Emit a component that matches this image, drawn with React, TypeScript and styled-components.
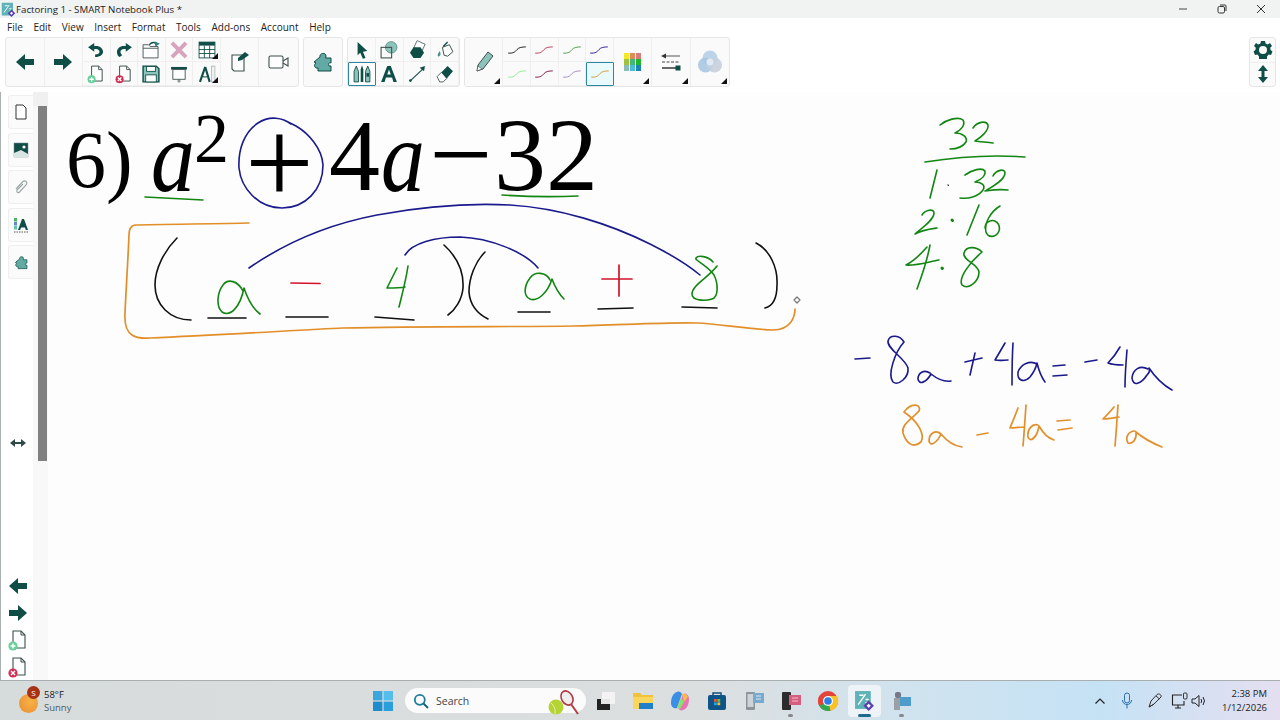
import { ReactNode } from "react";
import styled, { createGlobalStyle } from "styled-components";

const DARK = "#0f4d47";
const TEAL = "#8cc4bc";
const LINE = "#3d4f4d";

const GlobalStyle = createGlobalStyle`
  html, body { margin: 0; padding: 0; background: #fff; }
  body { font-family: "Open Sans", "Noto Sans", sans-serif; color: #222; }
`;

const Ico = ({ w = 24, h = 24, children }: { w?: number; h?: number; children: ReactNode }) => (
  <svg width={w} height={h} viewBox={`0 0 ${w} ${h}`} fill="none">{children}</svg>
);

const ArrowLeft = () => (
  <Ico w={20} h={18}><path d="M1 9 L10 1 V6 H19 V12 H10 V17 Z" fill={DARK} /></Ico>
);
const ArrowRight = () => (
  <Ico w={20} h={18}><path d="M19 9 L10 1 V6 H1 V12 H10 V17 Z" fill={DARK} /></Ico>
);
const Undo = () => (
  <Ico w={20} h={18}><path d="M8 1 L1 6 L8 11 V8 C12 7 14 9 14 11 C14 13 12 14 9 14 V17 C15 17 18 14 18 11 C18 7 14 3.5 8 4.5 Z" fill={DARK} /></Ico>
);
const Redo = () => (
  <Ico w={20} h={18}><path d="M12 1 L19 6 L12 11 V8 C8 7 6 9 6 11 C6 13 7 14 8 15 L5 17 C3 16 2 14 2 11 C2 7 6 3.5 12 4.5 Z" fill={DARK} /></Ico>
);
const DocPlain = ({ badge }: { badge?: "add" | "del" }) => (
  <Ico w={22} h={22}>
    <path d="M6 2 H14 L18 6 V19 H6 Z" fill="#fff" stroke={LINE} strokeWidth="1.1" />
    <path d="M14 2 V6 H18" stroke={LINE} strokeWidth="1" />
    {badge === "add" && <>
      <circle cx="6" cy="17" r="4.6" fill="#67cf9a" />
      <path d="M3.5 17 H8.5 M6 14.5 V19.5" stroke="#fff" strokeWidth="1.5" />
    </>}
    {badge === "del" && <>
      <circle cx="6" cy="17" r="4.6" fill="#d42f55" />
      <path d="M4 15 L8 19 M8 15 L4 19" stroke="#fff" strokeWidth="1.4" />
    </>}
  </Ico>
);
const OpenFolder = () => (
  <Ico w={24} h={22}>
    <path d="M3 5 H9 L11 7 H20 V20 H3 Z" fill="#fff" stroke={LINE} strokeWidth="1" />
    <path d="M3 9 H20" stroke={LINE} strokeWidth="1" />
    <path d="M10 5 C13 2 16 2 18 4" stroke={DARK} strokeWidth="1.4" />
    <path d="M16 1 L22 4 L17 7 Z" fill="#2a7d86" />
  </Ico>
);
const CrossMark = () => (
  <Ico w={22} h={22}>
    <path d="M3 3 L19 19 M19 3 L3 19" stroke="#d8a3bd" strokeWidth="4.4" />
  </Ico>
);
const TableIcon = () => (
  <Ico w={22} h={22}>
    <rect x="2" y="2" width="18" height="18" fill="#fff" stroke={DARK} strokeWidth="1" />
    <rect x="2" y="2" width="18" height="4" fill={DARK} />
    <path d="M2 10.5 H20 M2 15 H20 M8 6 V20 M14 6 V20" stroke={DARK} strokeWidth="1" />
  </Ico>
);
const SaveIcon = () => (
  <Ico w={22} h={22}>
    <path d="M2 2 H17 L20 5 V20 H2 Z" fill={TEAL} stroke={DARK} strokeWidth="1.6" />
    <rect x="6" y="2.5" width="10" height="5.5" fill="#fff" stroke={DARK} />
    <rect x="5" y="12" width="12" height="8" fill="#fff" stroke={DARK} />
  </Ico>
);
const ScreenIcon = () => (
  <Ico w={22} h={22}>
    <rect x="2" y="3" width="18" height="3" fill={DARK} />
    <rect x="4" y="6" width="14" height="11" fill="#fff" stroke={LINE} />
    <circle cx="11" cy="19" r="1.3" stroke={LINE} strokeWidth=".8" />
  </Ico>
);
const CompassIcon = () => (
  <Ico w={22} h={22}>
    <path d="M9 3 L3 20 M9 3 L14 20" stroke={DARK} strokeWidth="2.4" />
    <path d="M5 13 Q9 16 13 13" stroke={DARK} strokeWidth="1.2" />
    <rect x="16" y="2" width="4" height="18" fill="#eef3f2" stroke="#97a5a3" strokeWidth=".7" />
  </Ico>
);
const NoteIcon = () => (
  <Ico w={22} h={24}>
    <path d="M3 5 H15 V21 H5 L3 19 Z" fill="#fff" stroke={LINE} strokeWidth="1.1" />
    <path d="M9 8 L16 2 L20 5 L13 10 L9 11 Z" fill={DARK} />
  </Ico>
);
const CameraIcon = () => (
  <Ico w={22} h={16}>
    <rect x="1" y="2" width="14" height="12" rx="1.5" fill="#fff" stroke={LINE} strokeWidth="1.1" />
    <path d="M15 7 L20 4 V12 L15 9" stroke={LINE} strokeWidth="1.1" />
  </Ico>
);
const Puzzle = ({ s = 22 }: { s?: number }) => (
  <svg width={s} height={s} viewBox="0 0 22 22" fill="none">
    <path d="M8 6 C7 2 14 1 14 5 C14 6 14 6 13.5 7 H19 V12 C17 11 16 13 17 15 L19 15 V20 H6 V17 C3 18 1 14 4 12 L2 11 Z" fill="#62aaa3" stroke={DARK} strokeWidth="1" />
  </svg>
);
const Pointer = () => (
  <Ico w={20} h={22}><path d="M5 2 L16 12 L11 13 L14 20 L11 21 L8 14 L5 17 Z" fill={DARK} /></Ico>
);
const Shapes = () => (
  <Ico w={22} h={22}>
    <circle cx="13.5" cy="8" r="6.5" fill={TEAL} stroke="#5d8a85" />
    <rect x="2" y="8" width="12" height="12" stroke={LINE} strokeWidth="1.2" />
  </Ico>
);
const Hexagon = () => (
  <Ico w={22} h={22}>
    <rect x="9" y="2" width="10" height="9" transform="rotate(25 14 6)" fill="#fff" stroke={LINE} strokeWidth=".8" />
    <path d="M7 8 H15 L19 14 L15 20 H7 L3 14 Z" fill={DARK} />
  </Ico>
);
const Bucket = () => (
  <Ico w={22} h={22}>
    <path d="M8 8 L16 5 L20 13 L14 18 L10 17 Z" fill="#fff" stroke={LINE} strokeWidth="1.1" />
    <path d="M9 7 L14 2" stroke={DARK} strokeWidth="1.6" />
    <path d="M5 12 C3 15 2 16 3 18 C5 19 6 17 6 15 Z" fill="#4e938c" />
  </Ico>
);
const PensIcon = () => (
  <Ico w={24} h={22}>
    <path d="M3 8 L5.5 2 L8 8 V20 H3 Z" fill={TEAL} stroke={DARK} />
    <path d="M12 1 L13.5 6 V20 H10.5 V6 Z" fill={DARK} />
    <path d="M16 8 L18.5 2 L21 8 V20 H16 Z" fill={TEAL} stroke={DARK} />
    <rect x="17" y="10" width="3" height="4" fill={DARK} />
  </Ico>
);
const TextA = () => (
  <Ico w={20} h={22}><path d="M8 2 H12 L19 20 H15 L13.5 15 H6.5 L5 20 H1 Z M8 11.5 H12 L10 6 Z" fill={DARK} fillRule="evenodd" /></Ico>
);
const LineIcon = () => (
  <Ico w={22} h={22}>
    <path d="M3 19 L19 4" stroke={DARK} strokeWidth="1.2" />
    <circle cx="3.5" cy="18.5" r="1.5" fill={DARK} />
    <path d="M20 2 L19 8 L14 4 Z" fill={DARK} />
  </Ico>
);
const Eraser = () => (
  <Ico w={22} h={22}>
    <path d="M2 14 L7 9 L13 16 L9 20 H5 Z" fill="#fff" stroke={LINE} />
    <path d="M7 9 L14 2 L20 8 L13 16 Z" fill={DARK} />
  </Ico>
);
const PenBig = () => (
  <Ico w={22} h={26}>
    <path d="M5 16 L15 3 L20 7 L10 20 L4 22 Z" fill={TEAL} stroke={LINE} />
    <path d="M4 22 L5 17 L9 20 Z" fill="#fff" stroke={LINE} strokeWidth=".6" />
  </Ico>
);
const Squiggle = ({ color }: { color: string }) => (
  <Ico w={24} h={12}>
    <path d="M2 9.5 C8 10 10 8 12 5.5 C14 3 18 2.5 22 2.5" stroke={color} strokeWidth="1.1" />
  </Ico>
);
const Palette = () => {
  const cells = ["#f5e829", "#e08a5c", "#d97b78", "#9fc13b", "#41b778", "#1eb82a", "#8ebbb3", "#49bcd8", "#1c85b2"];
  return (
    <PaletteGrid>
      {cells.map((c) => <PaletteCell key={c} $color={c} />)}
    </PaletteGrid>
  );
};
const LineStyles = () => (
  <Ico w={22} h={20}>
    <path d="M5 4 H20" stroke="#555" strokeWidth="1" />
    <path d="M1 4 L6 1.5 V6.5 Z" fill="#333" />
    <path d="M2 10 H20" stroke="#444" strokeWidth="1" strokeDasharray="3 1.5" />
    <path d="M2 16 H16" stroke="#444" strokeWidth="1.6" />
    <rect x="15.5" y="13.5" width="5" height="5" fill={DARK} />
  </Ico>
);
const Effects = () => (
  <Ico w={26} h={26}>
    <circle cx="13" cy="9" r="7.5" fill="#bcd4ea" />
    <circle cx="8.5" cy="16" r="7.5" fill="#a9c7e2" opacity=".9" />
    <circle cx="17.5" cy="16" r="7.5" fill="#c5cfdb" opacity=".9" />
    <circle cx="13" cy="13" r="3.5" fill="#dfeaf5" />
  </Ico>
);
const Gear = () => (
  <Ico w={20} h={20}>
    <path d="M8 1 H12 L12.6 3.5 L14.8 4.4 L17 3 L19 6 L17.2 7.8 L17.6 10 L19.5 11.5 L18 15 L15.6 14.6 L14 16.4 L14 19 H10 H6 L6 16.4 L4.4 14.6 L2 15 L.5 11.5 L2.4 10 L2.8 7.8 L1 6 L3 3 L5.2 4.4 L7.4 3.5 Z" fill={DARK} />
    <circle cx="10" cy="10" r="4" fill="#fafafa" />
  </Ico>
);
const UpDown = () => (
  <Ico w={12} h={18}>
    <path d="M6 0 L11 6 H7.5 V12 H11 L6 18 L1 12 H4.5 V6 H1 Z" fill={DARK} />
  </Ico>
);
const SwapArrows = () => (
  <Ico w={16} h={10}>
    <path d="M0 5 L5 1 V4 H11 V1 L16 5 L11 9 V6 H5 V9 Z" fill="#2e4a47" />
  </Ico>
);
const Paperclip = () => (
  <Ico w={18} h={18}>
    <path d="M4 11 L11 3.5 C13 2 16 4 14.5 6.5 L7.5 14 C6 15.5 4 14 5 12 L11 6" stroke="#9aa5a3" strokeWidth="1.1" />
  </Ico>
);
const GalleryIcon = () => (
  <Ico w={18} h={18}>
    <rect x="2" y="2" width="14" height="14" fill={DARK} stroke="#789" strokeWidth=".5" />
    <path d="M2 12 L9 9 L16 13 V16 H2 Z" fill="#d7e5e3" />
    <circle cx="12" cy="6" r="1.6" fill="#fff" />
  </Ico>
);
const PropsIcon = () => (
  <Ico w={18} h={18}>
    <rect x="2" y="2" width="3" height="3.5" fill="#52b06a" />
    <rect x="2" y="6" width="3" height="3.5" fill="#5f8ec7" />
    <rect x="2" y="10" width="3" height="3.5" fill="#66c2a8" />
    <path d="M10 3 H12 L16 14 H13.8 L13 11.5 H9 L8.2 14 H6 Z" fill={DARK} />
    <path d="M2 16 H16" stroke="#555" strokeDasharray="1.5 1" />
  </Ico>
);

const Ink = () => (
  <InkLayer viewBox="48 92 1232 589" fill="none" strokeLinecap="round" strokeLinejoin="round">
    <g stroke="#e28f2a" strokeWidth="1.7">
      <path d="M249 223 C220 224 160 224 135 225 Q129 226 129 235 C128 260 126 290 125 313 Q124 330 132 335 Q138 339 150 338 C220 335 300 330 343 328 C420 326 520 327 573 326 C620 325 670 322 697 323 C720 324 745 329 773 330 Q785 330 791 322 Q795 316 795 309" />
      <path d="M904 412 C912 401 922 405 919 411 C912 419 901 424 903 433 C906 443 913 449 921 442 C925 435 919 422 904 412" />
      <path d="M941 434 C935 429 929 434 929 441 C930 447 937 443 941 434 C946 440 954 446 962 447" />
      <path d="M977 435 L988 433" />
      <path d="M1018 408 C1015 416 1012 423 1010 428 C1015 428 1020 427 1024 427 M1026 405 C1025 420 1024 435 1023 446" />
      <path d="M1038 425 C1032 423 1027 430 1028 437 C1030 443 1037 438 1039 426 C1043 433 1047 438 1054 440" />
      <path d="M1057 421 L1070 420 M1058 430 L1072 428" />
      <path d="M1114 407 C1110 412 1106 416 1103 419 C1108 419 1113 418 1119 417 M1118 405 C1117 420 1116 435 1115 446" />
      <path d="M1135 431 C1128 431 1125 438 1128 443 C1133 445 1137 438 1136 432 C1143 438 1152 443 1162 447" />
    </g>
    <g stroke="#1a1a8c" strokeWidth="1.6">
      <path d="M291 124 C283 118 270 115 258 123 C244 132 238 150 239 168 C241 188 258 208 282 208 C305 208 323 190 323 165 C322 148 308 133 296 126 L286 121" />
      <path d="M249 268 C285 243 330 224 377 215 C420 207 470 203 510 205 C560 208 610 224 650 244 C670 254 688 265 700 275" />
      <path d="M405 255 C412 243 435 237 460 237 C490 238 525 252 538 268" />
      <path d="M855 359 L870 358" />
      <path d="M904 342 C900 335 890 334 888 341 C887 349 905 358 908 368 C909 378 898 386 893 382 C887 375 895 352 904 342" />
      <path d="M930 373 C924 369 918 373 918 379 C919 385 926 383 931 374 C936 378 944 382 951 381" />
      <path d="M965 362 L982 358 M975 353 L970 375" />
      <path d="M1005 343 C1001 350 998 355 995 360 C1000 361 1004 360 1008 360 M1013 343 C1012 358 1012 372 1012 385" />
      <path d="M1037 364 C1030 360 1021 364 1018 372 C1017 381 1024 383 1030 377 C1034 372 1036 368 1037 363 C1039 371 1042 378 1045 382" />
      <path d="M1053 366 L1065 365 M1053 376 L1067 375" />
      <path d="M1085 362 L1097 360" />
      <path d="M1120 347 C1116 354 1111 360 1108 363 C1113 365 1118 365 1123 365 M1127 350 C1126 362 1125 375 1125 387" />
      <path d="M1148 369 C1140 365 1133 369 1132 378 C1133 387 1141 384 1147 375 C1150 372 1150 370 1149 368 C1155 377 1163 385 1172 390" />
    </g>
    <g stroke="#128612" strokeWidth="1.6">
      <path d="M145 197 C165 198 185 199 203 200" />
      <path d="M502 195 C530 197 555 197 578 196" />
      <path d="M243 291 C238 281 228 278 223 285 C217 293 216 306 222 312 C230 317 240 308 244 288 C247 297 252 308 260 314" />
      <path d="M397 268 L387 288 C395 288 400 288 405 287 M408 266 C406 280 402 295 399 307" />
      <path d="M550 280 C546 272 535 271 530 278 C524 286 523 296 530 299 C538 302 548 292 552 279 C555 287 559 294 564 299" />
      <path d="M717 266 C708 278 692 285 692 294 C692 301 705 301 712 299 C719 297 718 283 714 275 C708 266 694 260 696 258 C698 255 708 256 713 262" />
      <path d="M940 125 C946 120 958 116 963 120 C966 125 960 131 955 133 C962 133 968 137 966 142 C962 148 955 149 950 149" />
      <path d="M973 128 C977 122 986 120 988 125 C989 131 980 138 975 141 C980 142 987 142 993 143" />
      <path d="M925 162 C950 158 985 154 1025 157" />
      <path d="M937 170 L930 198" />
      <path d="M965 175 C972 170 982 167 985 171 C986 176 980 180 975 182 C981 182 986 185 983 190 C978 197 968 199 960 198" />
      <path d="M993 176 C996 170 1005 168 1005 173 C1005 180 992 187 985 191 C992 190 1000 189 1008 190" />
      <path d="M922 215 C925 210 934 208 934 213 C934 220 922 228 915 234 C922 230 930 229 937 228" />
      <path d="M952 220 L952.5 220.5" strokeWidth="3" />
      <path d="M979 205 L967 235" />
      <path d="M1000 206 C990 212 984 224 986 232 C988 238 996 238 999 231 C1001 224 995 219 990 221 C987 222 985 225 985 228" />
      <path d="M927 247 C920 255 912 262 906 265 C915 266 928 262 939 260 M930 245 C927 262 921 278 917 289" />
      <path d="M942 268 L942.4 268.4" strokeWidth="3" />
      <path d="M982 252 C976 246 966 246 964 253 C962 260 978 264 979 272 C979 282 968 290 962 285 C958 278 970 262 982 252" />
    </g>
    <g stroke="#d0142c" strokeWidth="1.7">
      <path d="M291 283 L320 283.5" />
      <path d="M602 279 L632 279 M619 265 L619 296" />
    </g>
    <g stroke="#111" strokeWidth="1.6">
      <path d="M177 238 C165 250 155 268 155 285 C155 305 170 320 191 320" />
      <path d="M208 318 L246 318" />
      <path d="M286 317 L328 317" />
      <path d="M375 317 L414 320" />
      <path d="M444 245 C455 255 464 270 463 288 C462 300 455 310 448 315" />
      <path d="M485 252 C475 262 469 278 469 292 C470 305 478 314 488 319" />
      <path d="M518 312 L550 312" />
      <path d="M598 309 L633 308" />
      <path d="M682 307 L717 308" />
      <path d="M756 243 C770 250 778 268 777 285 C777 297 773 306 765 308" />
      <path d="M948 185 L948.3 185.3" strokeWidth="1.2" />
    </g>
    <path d="M797 297 L800 300 L797 303 L794 300 Z" fill="#fff" stroke="#777" strokeWidth="1.2" />
  </InkLayer>
);

const WinLogo = () => (
  <Ico w={22} h={22}>
    <path d="M1 1 H10.4 V10.4 H1 Z" fill="#3aa6dc" />
    <path d="M11.6 1 H21 V10.4 H11.6 Z" fill="#55bdeb" />
    <path d="M1 11.6 H10.4 V21 H1 Z" fill="#1f8ccc" />
    <path d="M11.6 11.6 H21 V21 H11.6 Z" fill="#2b9fdc" />
  </Ico>
);
const SearchGlass = () => (
  <Ico w={16} h={16}>
    <circle cx="6.8" cy="6.8" r="5" stroke="#1b7e98" strokeWidth="1.8" />
    <path d="M10.5 10.5 L15 15" stroke="#0f5f7a" strokeWidth="1.8" />
  </Ico>
);
const TennisBadge = () => (
  <Ico w={34} h={26}>
    <circle cx="9" cy="18" r="7.5" fill="#b5d334" />
    <path d="M4 14 Q9 18 8 25" stroke="#e4efa4" strokeWidth="1" />
    <ellipse cx="20" cy="9" rx="5.5" ry="7.5" transform="rotate(-30 20 9)" fill="#eee" stroke="#b23b48" strokeWidth="1.6" />
    <path d="M24 15 L31 25" stroke="#b23b48" strokeWidth="2" />
  </Ico>
);
const TaskView = () => (
  <Ico w={20} h={20}>
    <rect x="6" y="1" width="13" height="12" fill="#f3f3f3" />
    <rect x="1" y="8" width="13" height="11" fill="#222" />
    <rect x="5" y="8" width="9" height="5" fill="#e4e4e4" />
  </Ico>
);
const Explorer = () => (
  <Ico w={22} h={20}>
    <path d="M1 2 H8 L10 4 H21 V18 H1 Z" fill="#f2c33a" />
    <path d="M1 6 H21 V18 H1 Z" fill="#fad65c" />
    <rect x="7" y="12" width="14" height="6" fill="#1f80c8" />
  </Ico>
);
const Copilot = () => (
  <Ico w={22} h={22}>
    <path d="M8 2 C4 3 2 8 2 13 C2 17 5 19 8 18 L13 4 C12 2 10 1 8 2 Z" fill="#3b8ee6" />
    <path d="M14 20 C18 19 20 14 20 9 C20 5 17 3 14 4 L9 18 C10 20 12 21 14 20 Z" fill="#e773b4" />
    <path d="M8 18 L12 8 L15 12 L11 19 Z" fill="#8adf6e" />
    <path d="M13 4 C15 3 18 4 19 7 L15 12 Z" fill="#f3bd4e" />
  </Ico>
);
const StoreIcon = () => (
  <Ico w={20} h={22}>
    <path d="M6 6 V3 H14 V6" stroke="#11507f" strokeWidth="1.5" />
    <rect x="1" y="5" width="18" height="15" rx="2" fill="#0f5487" />
    <rect x="7" y="9" width="2.8" height="2.8" fill="#e55b3c" />
    <rect x="10.4" y="9" width="2.8" height="2.8" fill="#70bf41" />
    <rect x="7" y="12.4" width="2.8" height="2.8" fill="#2da3e2" />
    <rect x="10.4" y="12.4" width="2.8" height="2.8" fill="#f5bd20" />
  </Ico>
);
const PhoneLink = () => (
  <Ico w={22} h={22}>
    <rect x="3" y="2" width="9" height="18" rx="1" fill="#8d9499" />
    <rect x="4.5" y="4" width="6" height="13" fill="#cdd3d6" />
    <rect x="10" y="3" width="11" height="10" fill="#78a9cf" />
    <path d="M13 6 H18 M13 9 H18" stroke="#dbeaf5" />
  </Ico>
);
const ScreenApp = () => (
  <Ico w={22} h={22}>
    <rect x="2" y="2" width="9" height="18" rx="1" fill="#2c2c2c" />
    <rect x="9" y="5" width="12" height="10" fill="#d65f80" />
    <path d="M12 8 H18 M12 11 H18" stroke="#f1bccd" />
  </Ico>
);
const Chrome = () => (
  <Ico w={22} h={22}>
    <circle cx="11" cy="11" r="10" fill="#e2463a" />
    <path d="M11 11 L2.4 16 A10 10 0 0 1 3 5 Z" fill="#e2463a" />
    <path d="M11 11 L2.4 16 A10 10 0 0 0 13.5 20.7 Z" fill="#31a853" />
    <path d="M11 11 L13.5 20.7 A10 10 0 0 0 20 6 L11 6 Z" fill="#fbc227" />
    <circle cx="11" cy="11" r="5" fill="#fff" />
    <circle cx="11" cy="11" r="3.8" fill="#2b7de9" />
  </Ico>
);
const NotebookLogo = ({ s = 20 }: { s?: number }) => (
  <svg width={s} height={s} viewBox="0 0 20 20" fill="none">
    <rect x="1" y="1" width="15" height="17" fill="#5fb3b7" />
    <path d="M4 14 L11 4 M11 9 H14 M11 12 H14 M5 5 H9" stroke="#fff" strokeWidth="1.3" />
    <path d="M14 10 L19 15 L14 20 L9 15 Z" fill="#5a3fb0" />
    <path d="M14 13 L16 15 L14 17 L12 15 Z" fill="#fff" />
  </svg>
);
const Camcorder = () => (
  <Ico w={20} h={22}>
    <rect x="3" y="2" width="6" height="6" rx="2" fill="#778" />
    <rect x="2" y="8" width="6" height="12" fill="#9aa0a3" />
    <rect x="8" y="7" width="11" height="9" fill="#4f9ccb" />
  </Ico>
);

const Tray = {
  Chevron: () => (
    <Ico w={12} h={8}><path d="M1.5 6.5 L6 2 L10.5 6.5" stroke="#222" strokeWidth="1.2" /></Ico>
  ),
  Mic: () => (
    <Ico w={12} h={18}>
      <rect x="3.5" y="1" width="5" height="10" rx="2.5" stroke="#2a6fb0" strokeWidth="1" />
      <path d="M1.5 8 C1.5 14 10.5 14 10.5 8 M6 13 V16.5" stroke="#2a6fb0" strokeWidth="1" />
    </Ico>
  ),
  Pen: () => (
    <Ico w={18} h={18}>
      <path d="M3 15 L5 9 L11 2.5 C13 1 16 3 15 5 L8 12 Z M3 15 L7.5 12.5 M10 4 L13.5 7" stroke="#333" strokeWidth="1" />
    </Ico>
  ),
  Monitor: () => (
    <Ico w={18} h={18}>
      <path d="M11 3 H1.5 V13 H13 V9 M7 13 V16 M4 16 H10" stroke="#222" strokeWidth="1.1" />
      <rect x="12.5" y="1" width="3.5" height="6" rx="1" stroke="#222" strokeWidth=".9" />
    </Ico>
  ),
  Volume: () => (
    <Ico w={16} h={16}>
      <path d="M1 6 H4 L8 2.5 V13.5 L4 10 H1 Z" stroke="#222" strokeWidth="1" />
      <path d="M10 6 Q11.5 8 10 10 M12 4 Q15 8 12 12" stroke="#222" strokeWidth="1" />
    </Ico>
  ),
};

const inkColors = [
  ["#1c1c1c", "#c23b5a", "#4f9e4f", "#2a1f9a"],
  ["#8cf09a", "#7c1c46", "#a98cc7", "#d79a3e"],
];

export default function App() {
  return (
    <Root>
      <GlobalStyle />
      <TitleBar>
        <TitleLeft>
          <NotebookLogo s={15} />
          <TitleText>Factoring 1 - SMART Notebook Plus *</TitleText>
        </TitleLeft>
        <WindowButtons>
          <WindowBtn>
            <Ico w={10} h={10}><path d="M1 5 H9" stroke="#444" strokeWidth="1" /></Ico>
          </WindowBtn>
          <WindowBtn>
            <Ico w={10} h={10}>
              <rect x="1" y="2.5" width="6.5" height="6.5" rx="1.4" stroke="#333" strokeWidth="1" />
              <path d="M3 1 H8 Q9 1 9 2 V7" stroke="#333" strokeWidth="1" />
            </Ico>
          </WindowBtn>
          <WindowBtn>
            <Ico w={10} h={10}><path d="M1 1 L9 9 M9 1 L1 9" stroke="#333" strokeWidth="1" /></Ico>
          </WindowBtn>
        </WindowButtons>
      </TitleBar>

      <MenuBar>
        {["File", "Edit", "View", "Insert", "Format", "Tools", "Add-ons", "Account", "Help"].map((m) => (
          <MenuItem key={m}>{m}</MenuItem>
        ))}
      </MenuBar>

      <ToolbarRow>
        <ToolGroup>
          <BigCell><ArrowLeft /></BigCell>
          <BigCell><ArrowRight /></BigCell>
          <Stack $cols={5}>
            <SmallCell><Undo /></SmallCell>
            <SmallCell><Redo /></SmallCell>
            <SmallCell><OpenFolder /></SmallCell>
            <SmallCell><CrossMark /></SmallCell>
            <SmallCell><TableIcon /><Corner /></SmallCell>
            <SmallCell><DocPlain badge="add" /></SmallCell>
            <SmallCell><DocPlain badge="del" /></SmallCell>
            <SmallCell><SaveIcon /></SmallCell>
            <SmallCell><ScreenIcon /></SmallCell>
            <SmallCell><CompassIcon /><Corner /></SmallCell>
          </Stack>
          <BigCell><NoteIcon /></BigCell>
          <BigCell><CameraIcon /></BigCell>
        </ToolGroup>
        <ToolGroup>
          <BigCell><Puzzle /></BigCell>
        </ToolGroup>
        <ToolGroup>
          <Stack $cols={4}>
            <SmallCell><Pointer /></SmallCell>
            <SmallCell><Shapes /></SmallCell>
            <SmallCell><Hexagon /></SmallCell>
            <SmallCell><Bucket /></SmallCell>
            <SmallCell $active $tint="#fff"><PensIcon /></SmallCell>
            <SmallCell><TextA /></SmallCell>
            <SmallCell><LineIcon /></SmallCell>
            <SmallCell><Eraser /></SmallCell>
          </Stack>
        </ToolGroup>
        <ToolGroup>
          <BigCell><PenBig /><Corner /></BigCell>
          <Stack $cols={4}>
            {inkColors.flat().map((c, i) => (
              <SmallCell key={c} $active={i === 7} $tint="#e9fafc"><Squiggle color={c} /></SmallCell>
            ))}
          </Stack>
          <BigCell><Palette /><Corner /></BigCell>
          <BigCell><LineStyles /><Corner /></BigCell>
          <BigCell><Effects /><Corner /></BigCell>
        </ToolGroup>
        <Spacer />
        <SideGroup>
          <SideGroupCell><Gear /></SideGroupCell>
          <SideGroupCell><UpDown /></SideGroupCell>
        </SideGroup>
      </ToolbarRow>

      <Main>
        <Sidebar>
          <SideTabs>
            <SideTab><Ico w={14} h={16}><path d="M2 1 H9 L12 4 V15 H2 Z" fill="#fff" stroke="#333" strokeWidth="1" /></Ico></SideTab>
            <SideTab><GalleryIcon /></SideTab>
            <SideTab><Paperclip /></SideTab>
            <SideTab><PropsIcon /></SideTab>
            <SideTab><Puzzle s={15} /></SideTab>
          </SideTabs>
          <SwapRow><SwapArrows /></SwapRow>
          <SideActions>
            <ArrowLeft />
            <ArrowRight />
            <DocPlain badge="add" />
            <DocPlain badge="del" />
          </SideActions>
        </Sidebar>
        <ScrollColumn>
          <ScrollHead />
          <ScrollThumb />
        </ScrollColumn>
        <Whiteboard>
          <Term $x={66} $base={187} $size={80}>6)</Term>
          <Term $x={151} $base={191} $size={102} $italic $squeeze={0.86}>a</Term>
          <Term $x={194} $base={163} $size={70}>2</Term>
          <Term $x={245} $base={204} $size={122}>+</Term>
          <Term $x={329} $base={190} $size={102}>4</Term>
          <Term $x={381} $base={191} $size={102} $italic $squeeze={0.86}>a</Term>
          <Term $x={429} $base={192} $size={112}>−</Term>
          <Term $x={494} $base={190} $size={104}>32</Term>
          <Ink />
        </Whiteboard>
      </Main>

      <Taskbar>
        <Weather>
          <Sunny>
            <SunBadge>S</SunBadge>
          </Sunny>
          <WeatherText>
            <WeatherTemp>58°F</WeatherTemp>
            <WeatherNote>Sunny</WeatherNote>
          </WeatherText>
        </Weather>
        <TaskCenter>
          <TaskIcon><WinLogo /></TaskIcon>
          <SearchBox>
            <SearchGlass />
            <SearchLabel>Search</SearchLabel>
            <SearchArt><TennisBadge /></SearchArt>
          </SearchBox>
          <TaskIcon><TaskView /></TaskIcon>
          <TaskIcon><Explorer /></TaskIcon>
          <TaskIcon><Copilot /></TaskIcon>
          <TaskIcon><StoreIcon /></TaskIcon>
          <TaskIcon><PhoneLink /></TaskIcon>
          <TaskIcon $running><ScreenApp /></TaskIcon>
          <TaskIcon><Chrome /></TaskIcon>
          <TaskIcon $focused><NotebookLogo s={21} /></TaskIcon>
          <TaskIcon $running><Camcorder /></TaskIcon>
        </TaskCenter>
        <TrayArea>
          <TrayIcon $w={27}><Tray.Chevron /></TrayIcon>
          <TrayIcon $w={27}><Tray.Mic /></TrayIcon>
          <TrayIcon $w={30}><Tray.Pen /></TrayIcon>
          <TrayIcon $w={19}><Tray.Monitor /></TrayIcon>
          <TrayIcon $w={19}><Tray.Volume /></TrayIcon>
          <Clock>
            <span>2:38 PM</span>
            <span>1/12/2026</span>
          </Clock>
        </TrayArea>
      </Taskbar>
    </Root>
  );
}

const Root = styled.div`
  width: 1280px;
  height: 720px;
  display: flex;
  flex-direction: column;
  overflow: hidden;
  background: #fff;
`;

const TitleBar = styled.div`
  height: 18px;
  flex: none;
  display: flex;
  align-items: center;
  justify-content: space-between;
  background: #f1f2f2;
`;

const TitleLeft = styled.div`
  display: flex;
  align-items: center;
  gap: 0;
  padding-left: 1px;
`;

const TitleText = styled.span`
  font-size: 9.7px;
  color: #222;
`;

const WindowButtons = styled.div`
  display: flex;
`;

const WindowBtn = styled.div`
  width: 39px;
  height: 18px;
  display: flex;
  align-items: center;
  justify-content: center;
`;

const MenuBar = styled.div`
  height: 18px;
  flex: none;
  display: flex;
  align-items: center;
  gap: 10.6px;
  padding-left: 7px;
  background: #fff;
`;

const MenuItem = styled.span`
  font-size: 10px;
  color: #222;
`;

const ToolbarRow = styled.div`
  height: 56px;
  flex: none;
  display: flex;
  gap: 4px;
  padding: 1px 4px 0 5px;
  box-sizing: border-box;
  background: #fff;
`;

const ToolGroup = styled.div`
  height: 50px;
  display: flex;
  background: #fafafa;
  border: 1px solid #e6e6e6;
  border-radius: 3px;
  box-sizing: border-box;
`;

const BigCell = styled.div`
  position: relative;
  width: 38.5px;
  box-sizing: border-box;
  display: flex;
  align-items: center;
  justify-content: center;
  border-right: 1px solid #efefef;
  &:last-child { border-right: none; }
`;

const Stack = styled.div<{ $cols: number }>`
  display: grid;
  grid-template-columns: repeat(${(p) => p.$cols}, 27.6px);
  grid-template-rows: 24px 24px;
  & svg { transform: scale(0.88); }
`;

const SmallCell = styled.div<{ $active?: boolean; $tint?: string }>`
  position: relative;
  display: flex;
  align-items: center;
  justify-content: center;
  box-sizing: border-box;
  border-right: 1px solid #efefef;
  border-bottom: 1px solid #efefef;
  ${(p) => p.$active && `
    background: ${p.$tint};
    border: 1.5px solid #2d86a3;
    border-radius: 1px;
  `}
`;

const Corner = styled.span`
  position: absolute;
  right: 2px;
  bottom: 2px;
  width: 0;
  height: 0;
  border-left: 6px solid transparent;
  border-bottom: 6px solid #111;
`;

const PaletteGrid = styled.div`
  display: grid;
  grid-template-columns: repeat(3, 5.5px);
  grid-auto-rows: 5.5px;
  gap: 0.5px;
`;

const PaletteCell = styled.i<{ $color: string }>`
  display: block;
  background: ${(p) => p.$color};
`;

const Spacer = styled.div`
  flex: 1;
`;

const SideGroup = styled.div`
  width: 27px;
  height: 50px;
  display: flex;
  flex-direction: column;
  background: #fafafa;
  border: 1px solid #e6e6e6;
  border-radius: 3px;
  box-sizing: border-box;
`;

const SideGroupCell = styled.div`
  flex: 1;
  display: flex;
  align-items: center;
  justify-content: center;
  &:first-child { border-bottom: 1px solid #efefef; }
`;

const Main = styled.div`
  flex: 1;
  min-height: 0;
  display: flex;
  border-left: 1px solid #aab0b0;
`;

const Sidebar = styled.div`
  width: 32px;
  flex: none;
  display: flex;
  flex-direction: column;
  background: #fff;
`;

const SideTabs = styled.div`
  display: flex;
  flex-direction: column;
  gap: 3.5px;
  padding: 3px 0 0 7px;
`;

const SideTab = styled.div`
  width: 25px;
  height: 34px;
  display: flex;
  align-items: center;
  justify-content: center;
  background: #fbfbfb;
  border: 1px solid #efefef;
  border-right: none;
  border-radius: 3px 0 0 3px;
  box-sizing: border-box;
`;

const SwapRow = styled.div`
  margin-top: 156px;
  padding-left: 9px;
  height: 16px;
  display: flex;
  align-items: center;
`;

const SideActions = styled.div`
  margin-top: auto;
  display: grid;
  grid-auto-rows: 27px;
  justify-items: center;
  align-items: center;
  padding-left: 2px;
`;

const ScrollColumn = styled.div`
  width: 15px;
  flex: none;
  display: flex;
  flex-direction: column;
  background: #f8f8f8;
`;

const ScrollHead = styled.div`
  height: 14px;
  background: #f0f0f0;
`;

const ScrollThumb = styled.div`
  width: 9px;
  margin-left: 5px;
  height: 355px;
  background: #808080;
`;

const Whiteboard = styled.div`
  position: relative;
  flex: 1;
  background: #fdfdfd;
  overflow: hidden;
`;

const InkLayer = styled.svg`
  position: absolute;
  left: 0;
  top: 0;
  width: 1232px;
  height: 589px;
`;

const Term = styled.span<{ $x: number; $base: number; $size: number; $italic?: boolean; $squeeze?: number }>`
  position: absolute;
  left: ${(p) => p.$x - 48}px;
  top: ${(p) => p.$base - 92 - p.$size * 0.8375}px;
  font-family: "Liberation Serif", "Times New Roman", serif;
  font-size: ${(p) => p.$size}px;
  font-style: ${(p) => (p.$italic ? "italic" : "normal")};
  line-height: 1;
  color: #000;
  white-space: pre;
  transform-origin: left center;
  transform: scaleX(${(p) => p.$squeeze ?? 1});
`;

const Taskbar = styled.div`
  height: 40px;
  flex: none;
  display: flex;
  align-items: center;
  box-sizing: border-box;
  border-top: 1px solid #a9aeb0;
  background: linear-gradient(90deg, #d6dbdc 0%, #dcdfe0 55%, #cfe3ef 72%, #c5e2f5 86%, #e4dff0 100%);
`;

const Weather = styled.div`
  width: 372px;
  flex: none;
  display: flex;
  align-items: center;
  gap: 6px;
  padding-left: 19px;
  box-sizing: border-box;
`;

const Sunny = styled.div`
  position: relative;
  width: 19px;
  height: 19px;
  margin-top: 6px;
  border-radius: 50%;
  background: radial-gradient(circle at 60% 40%, #f7b24a, #e98c2c);
`;

const SunBadge = styled.span`
  position: absolute;
  left: 8px;
  top: -8px;
  width: 13px;
  height: 13px;
  border-radius: 50%;
  background: #a93214;
  color: #fff;
  font-size: 8px;
  line-height: 13px;
  text-align: center;
`;

const WeatherText = styled.div`
  display: flex;
  flex-direction: column;
  font-size: 9.5px;
  line-height: 13px;
`;

const WeatherTemp = styled.span`
  color: #222;
`;

const WeatherNote = styled.span`
  color: #4e5d66;
`;

const TaskCenter = styled.div`
  display: flex;
  align-items: center;
  width: 546px;
  flex: none;
`;

const TaskIcon = styled.div<{ $running?: boolean; $focused?: boolean }>`
  position: relative;
  width: 37px;
  height: 32px;
  flex: none;
  display: flex;
  align-items: center;
  justify-content: center;
  border-radius: 4px;
  &:first-child { width: 22px; margin-right: 11px; }
  ${(p) => p.$focused && `
    width: 33px;
    margin: 0 2px;
    background: rgba(255, 255, 255, 0.6);
    &::after {
      content: "";
      position: absolute;
      left: 10px;
      bottom: 0;
      width: 13px;
      height: 2.5px;
      border-radius: 2px;
      background: #1c6b8f;
    }
  `}
  ${(p) => p.$running && `
    &::after {
      content: "";
      position: absolute;
      left: 16px;
      bottom: 0;
      width: 5px;
      height: 2.5px;
      border-radius: 2px;
      background: #85898c;
    }
  `}
`;

const SearchBox = styled.div`
  position: relative;
  width: 181px;
  height: 25px;
  flex: none;
  margin-right: 1px;
  display: flex;
  align-items: center;
  gap: 7px;
  padding-left: 8px;
  box-sizing: border-box;
  background: #fbfbfb;
  border-radius: 13px;
`;

const SearchLabel = styled.span`
  font-size: 10.5px;
  color: #444;
`;

const SearchArt = styled.div`
  position: absolute;
  right: 5px;
  top: 1px;
`;

const TrayArea = styled.div`
  flex: 1;
  display: flex;
  align-items: center;
  padding-left: 168px;
`;

const TrayIcon = styled.div<{ $w: number }>`
  width: ${(p) => p.$w}px;
  flex: none;
  display: flex;
  align-items: center;
  justify-content: center;
`;

const Clock = styled.div`
  flex: 1;
  display: flex;
  flex-direction: column;
  align-items: flex-end;
  padding-right: 13px;
  font-size: 9.5px;
  line-height: 14px;
  color: #222;
`;
